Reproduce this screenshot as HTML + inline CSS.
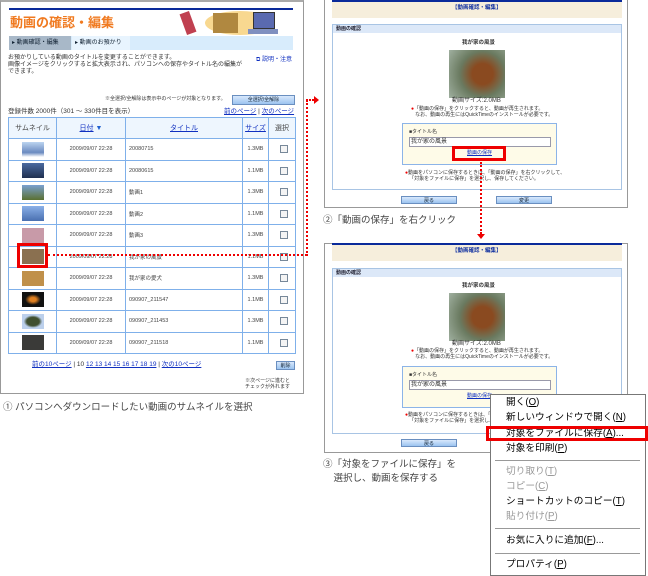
<!DOCTYPE html>
<html><head><meta charset="utf-8"><style>
*{margin:0;padding:0;box-sizing:border-box}
body{width:648px;height:576px;background:#fff;position:relative;overflow:hidden;font-family:"Liberation Sans","Noto Sans CJK JP",sans-serif;color:#333}
.a{position:absolute}
.t{position:absolute;font-size:6px;white-space:nowrap;line-height:1}
.lk{color:#1030c0;text-decoration:underline}
table{border-collapse:collapse;position:absolute;left:8px;top:117px;width:288px}
td{border:1px solid #7fb0ea;font-size:5.5px;height:21.5px;color:#444;padding-left:3px}
tr.h td{height:21px;background:#eef6fe;font-size:7px;text-align:center;padding:0}
.th{display:block;margin:0 auto;width:22px;height:15px}
.cb{display:block;margin:0 auto;width:8px;height:8px;border:1px solid #789;background:#f4f4f4}
.ctr{text-align:center;padding:0}
.btn{position:absolute;background:linear-gradient(#d8e8fc,#9cc4f0);border:1px solid #6a8fc0;font-size:5px;text-align:center;line-height:8px;color:#123}
.m{position:absolute;left:506px;font-size:9.7px;color:#000;white-space:nowrap;line-height:1}
.g{color:#999}
.sep{position:absolute;left:495px;width:145px;height:1px;background:#999}
</style></head><body>
<!-- left panel -->
<div class="a" style="left:0;top:0;width:304px;height:394px;border:1px solid #999;border-top:2px solid #aaa"></div>
<div class="a" style="left:9px;top:8px;width:284px;height:2px;background:#0a2a9a"></div>
<div class="t" style="left:10px;top:16px;font-size:13px;font-weight:bold;color:#f07a20">動画の確認・編集</div>
<div class="a" style="left:205px;top:11px;width:70px;height:24px;border-radius:50%;background:#f8d890"></div>
<div class="a" style="left:213px;top:13px;width:25px;height:20px;background:#b08840"></div>
<div class="a" style="left:183px;top:12px;width:10px;height:22px;background:#c04050;transform:rotate(-20deg)"></div>
<div class="a" style="left:253px;top:12px;width:22px;height:17px;background:#5a6ab0;border:1px solid #333"></div>
<div class="a" style="left:248px;top:29px;width:30px;height:5px;background:#8090c0"></div>
<div class="a" style="left:9px;top:36px;width:284px;height:14px;background:#d8ecfc"></div>
<div class="a" style="left:9px;top:36px;width:62px;height:14px;background:#a8b8c8"></div>
<div class="a" style="left:72px;top:36px;width:58px;height:14px;background:#e8f4fe"></div>
<div class="t" style="left:12px;top:40px;font-size:6px;color:#123">▸ 動画確認・編集</div>
<div class="t" style="left:75px;top:40px;font-size:6px;color:#123">▸ 動画のお預かり</div>
<div class="t" style="left:8px;top:55px;line-height:7px;color:#333">お預かりしている動画のタイトルを変更することができます。<br>画像イメージをクリックすると拡大表示され、パソコンへの保存やタイトル名の編集が<br>できます。</div>
<div class="t" style="left:256px;top:57px;color:#1030c0">⧉ 説明・注意</div>
<div class="t" style="left:105px;top:97px;font-size:5px">※全選択/全解除は表示中のページが対象となります。</div>
<div class="btn" style="left:232px;top:95px;width:63px;height:10px">全選択/全解除</div>
<div class="t" style="left:8px;top:109px;font-size:6.5px">登録件数 2000件（301 ～ 330件目を表示）</div>
<div class="t" style="left:224px;top:109px;font-size:6.5px"><span class="lk">前のページ</span> | <span class="lk">次のページ</span></div>
<table>
<tr class="h"><td style="width:48px">サムネイル</td><td style="width:69px"><span class="lk">日付</span> <span style="color:#2060d0">▼</span></td><td style="width:117px"><span class="lk">タイトル</span></td><td style="width:26px"><span class="lk">サイズ</span></td><td>選択</td></tr>
<tr><td class="ctr"><span class="th" style="background:linear-gradient(#bcd4f0,#6a8ac0 70%,#fff)"></span></td><td class="ctr">2009/09/07 22:28</td><td>20080715</td><td class="ctr">1.3MB</td><td><span class="cb"></span></td></tr>
<tr><td class="ctr"><span class="th" style="background:linear-gradient(#4a6aa0,#203050)"></span></td><td class="ctr">2009/09/07 22:28</td><td>20080615</td><td class="ctr">1.1MB</td><td><span class="cb"></span></td></tr>
<tr><td class="ctr"><span class="th" style="background:linear-gradient(#7aa0d0,#5a7030)"></span></td><td class="ctr">2009/09/07 22:28</td><td>動画1</td><td class="ctr">1.3MB</td><td><span class="cb"></span></td></tr>
<tr><td class="ctr"><span class="th" style="background:linear-gradient(#8ab0e8,#4a70b0)"></span></td><td class="ctr">2009/09/07 22:28</td><td>動画2</td><td class="ctr">1.1MB</td><td><span class="cb"></span></td></tr>
<tr><td class="ctr"><span class="th" style="background:#c89aa8"></span></td><td class="ctr">2009/09/07 22:28</td><td>動画3</td><td class="ctr">1.3MB</td><td><span class="cb"></span></td></tr>
<tr><td class="ctr"><span class="th" style="background:#8a7050"></span></td><td class="ctr">2009/09/07 22:28</td><td>我が家の風景</td><td class="ctr">1.1MB</td><td><span class="cb"></span></td></tr>
<tr><td class="ctr"><span class="th" style="background:#c0904a"></span></td><td class="ctr">2009/09/07 22:28</td><td>我が家の愛犬</td><td class="ctr">1.3MB</td><td><span class="cb"></span></td></tr>
<tr><td class="ctr"><span class="th" style="background:radial-gradient(#e08020 20%,#111 50%)"></span></td><td class="ctr">2009/09/07 22:28</td><td>090907_211547</td><td class="ctr">1.1MB</td><td><span class="cb"></span></td></tr>
<tr><td class="ctr"><span class="th" style="background:radial-gradient(#405030 40%,#bcd0ec 60%)"></span></td><td class="ctr">2009/09/07 22:28</td><td>090907_211453</td><td class="ctr">1.3MB</td><td><span class="cb"></span></td></tr>
<tr><td class="ctr"><span class="th" style="background:#3a3a38"></span></td><td class="ctr">2009/09/07 22:28</td><td>090907_211518</td><td class="ctr">1.1MB</td><td><span class="cb"></span></td></tr>
</table>
<div class="a" style="left:17px;top:243px;width:31px;height:25px;border:3px solid #e00"></div>
<div class="t" style="left:32px;top:362px;font-size:6.5px"><span class="lk">前の10ページ</span> | 10 <span class="lk">12 13 14 15 16 17 18 19</span> | <span class="lk">次の10ページ</span></div>
<div class="btn" style="left:276px;top:361px;width:19px;height:9px">削除</div>
<div class="t" style="left:245px;top:378px;font-size:5px;line-height:6px;text-align:right">※次ページに進むと<br>チェックが外れます</div>
<div class="t" style="left:3px;top:403px;font-size:9.5px;color:#444">① パソコンへダウンロードしたい動画のサムネイルを選択</div>
<!-- dotted connector -->
<div class="a" style="left:48px;top:254px;width:259px;border-top:2px dotted #e00"></div>
<div class="a" style="left:306px;top:100px;height:156px;border-left:2px dotted #e00"></div>
<div class="a" style="left:306px;top:99px;width:8px;border-top:2px dotted #e00"></div>
<div class="a" style="left:314px;top:96px;border-left:5px solid #e00;border-top:4px solid transparent;border-bottom:4px solid transparent"></div>

<!-- right panels -->
<div class="a" style="left:324px;top:-2px;width:304px;height:210px;border:1px solid #999"></div>
<div class="a" style="left:332px;top:0;width:290px;height:18px;background:#f6eedc;border-top:2px solid #0a2a9a"></div>
<div class="t" style="left:452px;top:6px;font-size:5.5px;color:#1030a0;font-weight:bold">【動画確認・編集】</div>
<div class="a" style="left:332px;top:24px;width:290px;height:166px;border:1px solid #a8c4e4"></div>
<div class="a" style="left:333px;top:25px;width:288px;height:8px;background:#dce8f8"></div>
<div class="t" style="left:336px;top:27px;font-size:5px;font-weight:bold;color:#223">動画の確認</div>
<div class="t" style="left:462px;top:41px;font-size:5.5px;font-weight:bold">我が家の風景</div>
<div class="a" style="left:449px;top:50px;width:56px;height:48px;background:radial-gradient(circle at 60% 50%,#8a4a20 25%,#6a7a60 55%,#a0b0a0)"></div>
<div class="t" style="left:452px;top:98px;font-size:6px">動画サイズ:2.0MB</div>
<div class="t" style="left:411px;top:107px;font-size:5px;line-height:5.5px"><span style="color:#e00">●</span>「動画の保存」をクリックすると、動画が再生されます。<br>&nbsp;&nbsp;&nbsp;なお、動画の再生にはQuickTimeのインストールが必要です。</div>
<div class="a" style="left:402px;top:123px;width:155px;height:42px;background:#fefbe8;border:1px solid #8cb4e8"></div>
<div class="t" style="left:409px;top:130px;font-size:5px">■タイトル名</div>
<div class="a" style="left:409px;top:137px;width:142px;height:10px;background:#fff;border:1px solid #99a"></div>
<div class="t" style="left:411px;top:139px;font-size:6px">我が家の風景</div>
<div class="t" style="left:467px;top:151px;font-size:5px" ><span class="lk">動画の保存</span></div>
<div class="a" style="left:452px;top:146px;width:54px;height:15px;border:3px solid #e00"></div>
<div class="t" style="left:405px;top:171px;font-size:5px;line-height:5.5px"><span style="color:#e00">●</span>動画をパソコンに保存するときは、「動画の保存」を右クリックして、<br>&nbsp;&nbsp;&nbsp;「対象をファイルに保存」を選択し、保存してください。</div>
<div class="btn" style="left:401px;top:196px;width:56px;height:8px">戻る</div>
<div class="btn" style="left:496px;top:196px;width:56px;height:8px">変更</div>
<div class="t" style="left:323px;top:216px;font-size:9.5px;color:#444">②「動画の保存」を右クリック</div>
<div class="a" style="left:480px;top:162px;height:72px;border-left:2px dotted #e00"></div>
<div class="a" style="left:477px;top:234px;border-top:5px solid #e00;border-left:4px solid transparent;border-right:4px solid transparent"></div>

<div class="a" style="left:324px;top:243px;width:304px;height:210px;border:1px solid #999"></div>
<div class="a" style="left:332px;top:243px;width:290px;height:18px;background:#f6eedc;border-top:2px solid #0a2a9a"></div>
<div class="t" style="left:452px;top:249px;font-size:5.5px;color:#1030a0;font-weight:bold">【動画確認・編集】</div>
<div class="a" style="left:332px;top:268px;width:290px;height:166px;border:1px solid #a8c4e4"></div>
<div class="a" style="left:333px;top:269px;width:288px;height:8px;background:#dce8f8"></div>
<div class="t" style="left:336px;top:271px;font-size:5px;font-weight:bold;color:#223">動画の確認</div>
<div class="t" style="left:462px;top:284px;font-size:5.5px;font-weight:bold">我が家の風景</div>
<div class="a" style="left:449px;top:293px;width:56px;height:48px;background:radial-gradient(circle at 60% 50%,#8a4a20 25%,#6a7a60 55%,#a0b0a0)"></div>
<div class="t" style="left:452px;top:341px;font-size:6px">動画サイズ:2.0MB</div>
<div class="t" style="left:411px;top:349px;font-size:5px;line-height:5.5px"><span style="color:#e00">●</span>「動画の保存」をクリックすると、動画が再生されます。<br>&nbsp;&nbsp;&nbsp;なお、動画の再生にはQuickTimeのインストールが必要です。</div>
<div class="a" style="left:402px;top:366px;width:155px;height:42px;background:#fefbe8;border:1px solid #8cb4e8"></div>
<div class="t" style="left:409px;top:373px;font-size:5px">■タイトル名</div>
<div class="a" style="left:409px;top:380px;width:142px;height:10px;background:#fff;border:1px solid #99a"></div>
<div class="t" style="left:411px;top:382px;font-size:6px">我が家の風景</div>
<div class="t" style="left:467px;top:394px;font-size:5px"><span class="lk">動画の保存</span></div>
<div class="t" style="left:405px;top:413px;font-size:5px;line-height:5.5px"><span style="color:#e00">●</span>動画をパソコンに保存するときは、「<br>&nbsp;&nbsp;&nbsp;「対象をファイルに保存」を選択し、保</div>
<div class="btn" style="left:401px;top:439px;width:56px;height:8px">戻る</div>
<div class="t" style="left:323px;top:458px;font-size:9.5px;color:#444;line-height:14px">③「対象をファイルに保存」を<br>&nbsp;&nbsp;&nbsp;&nbsp;選択し、動画を保存する</div>

<!-- context menu -->
<div class="a" style="left:490px;top:394px;width:156px;height:182px;background:#fff;border:1px solid #777"></div>
<div class="m" style="top:398px">開く(<u>O</u>)</div>
<div class="m" style="top:413px">新しいウィンドウで開く(<u>N</u>)</div>
<div class="m" style="top:429px">対象をファイルに保存(<u>A</u>)...</div>
<div class="a" style="left:486px;top:426px;width:162px;height:15px;border:3px solid #e00"></div>
<div class="m" style="top:444px">対象を印刷(<u>P</u>)</div>
<div class="sep" style="top:460px"></div>
<div class="m g" style="top:467px">切り取り(<u>T</u>)</div>
<div class="m g" style="top:482px">コピー(<u>C</u>)</div>
<div class="m" style="top:497px">ショートカットのコピー(<u>T</u>)</div>
<div class="m g" style="top:512px">貼り付け(<u>P</u>)</div>
<div class="sep" style="top:528px"></div>
<div class="m" style="top:536px">お気に入りに追加(<u>F</u>)...</div>
<div class="sep" style="top:553px"></div>
<div class="m" style="top:560px">プロパティ(<u>P</u>)</div>
</body></html>
